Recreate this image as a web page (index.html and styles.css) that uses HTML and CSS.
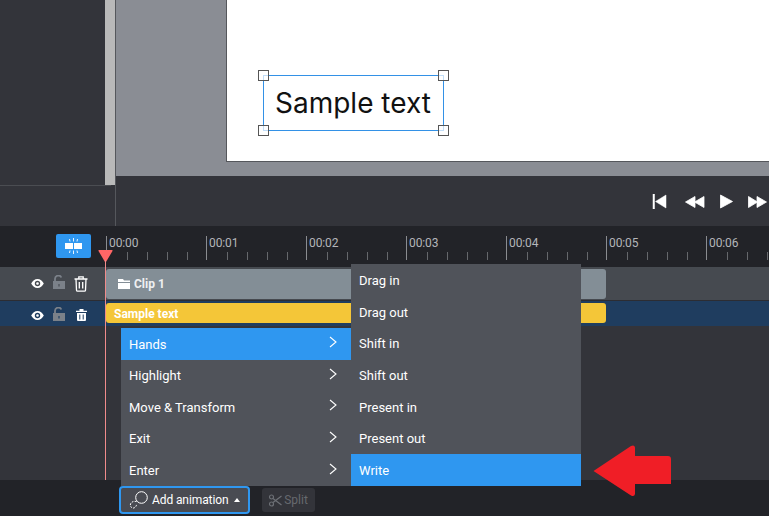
FILE: index.html
```html
<!DOCTYPE html>
<html lang="en">
<head>
<meta charset="utf-8">
<title>Animation editor</title>
<link rel="stylesheet" href="styles.css">
</head>
<body>
<div class="app">
  <section class="top">
    <aside class="side">
      <div class="side-main"><div class="side-fill"></div><div class="scrollbar"></div></div>
      <div class="side-foot"></div>
    </aside>
    <div class="main">
      <div class="stage">
        <div class="canvas">
          <div class="textbox">
            <span class="sample">Sample text</span>
            <i class="handle tl"></i><i class="handle tr"></i><i class="handle bl"></i><i class="handle br"></i>
          </div>
        </div>
      </div>
      <div class="transport">
        <svg class="ticon" width="15" height="15" viewBox="0 0 15 15"><path d="M1 0h1.500v15H1zM14 1v13L3.500 7.500z" fill="#fff" stroke="#fff" stroke-width=".5" stroke-linejoin="round"/></svg>
        <svg class="ticon t-rew" width="21" height="14" viewBox="0 0 21 14"><path d="M11 1.500v11L1.500 7zM20 1.500v11L10.500 7z" fill="#fff" stroke="#fff" stroke-width=".8" stroke-linejoin="round"/></svg>
        <svg class="ticon t-play" width="14" height="15" viewBox="0 0 14 15"><path d="M1.500 1l12 6.500-12 6.500z" fill="#fff" stroke="#fff" stroke-width=".8" stroke-linejoin="round"/></svg>
        <svg class="ticon t-ff" width="20" height="14" viewBox="0 0 20 14"><path d="M.5 1.500v11L9.500 7zM9 1.500v11L18.500 7z" fill="#fff" stroke="#fff" stroke-width=".8" stroke-linejoin="round"/></svg>
      </div>
    </div>
  </section>

  <section class="ruler">
    <div class="ruler-left">
      <button class="snap" aria-label="Snap">
        <svg width="18" height="16" viewBox="0 0 18 16"><path d="M0 5h8v6H0zM9 5h8v6H9z" fill="#fff"/><path d="M8.500 0v3.500M8.500 12.500V16M4.500 1l.5 2.500M12.500 1L12 3.500M4.500 15l.5-2.500M12.500 15l-.5-2.500" stroke="#fff" stroke-width=".9"/></svg>
      </button>
    </div>
    <div class="scale">
      <div class="sec">00:00</div><div class="sec">00:01</div><div class="sec">00:02</div><div class="sec">00:03</div><div class="sec">00:04</div><div class="sec">00:05</div><div class="sec">00:06</div>
    </div>
  </section>

  <section class="tracks">
    <div class="track track-clip">
      <div class="controls">
        <svg width="13" height="9" viewBox="0 0 14 10"><path d="M7 0C4 0 1.500 2 0 5c1.500 3 4 5 7 5s5.500-2 7-5c-1.500-3-4-5-7-5zm0 8a3 3 0 110-6 3 3 0 010 6zm0-1.500a1.500 1.500 0 100-3 1.500 1.500 0 000 3z" fill="#fff"/></svg>
        <svg class="lock" width="12" height="14" viewBox="0 0 12 14"><path d="M2 6.500V3.800a3.300 3.300 0 016.300-1.300" fill="none" stroke="#7b8189" stroke-width="1.800"/><path d="M0 6h12v8H0z" fill="#7b8189"/><path d="M5.300 9h1.400v2.500H5.300z" fill="#50555c"/></svg>
        <svg width="14" height="16" viewBox="0 0 14 16"><path d="M.5 3h13M4.800 3V.8h4.400V3M2 3l.5 11.200q.1 1 1 1h7q.9 0 1-1L12 3M5.300 6v6.500M8.700 6v6.500" fill="none" stroke="#fff" stroke-width="1.300"/></svg>
      </div>
      <div class="lane"><div class="clip"><svg width="12" height="10" viewBox="0 0 12 10"><path d="M0 0h5l1 1.500h6V3H0zM0 4h12v6H0z" fill="#fff"/></svg><span>Clip 1</span></div></div>
    </div>
    <div class="track track-text">
      <div class="controls">
        <svg width="13" height="9" viewBox="0 0 14 10"><path d="M7 0C4 0 1.500 2 0 5c1.500 3 4 5 7 5s5.500-2 7-5c-1.500-3-4-5-7-5zm0 8a3 3 0 110-6 3 3 0 010 6zm0-1.500a1.500 1.500 0 100-3 1.500 1.500 0 000 3z" fill="#fff"/></svg>
        <svg class="lock" width="12" height="14" viewBox="0 0 12 14"><path d="M2 6.500V3.800a3.300 3.300 0 016.300-1.300" fill="none" stroke="#7b8189" stroke-width="1.800"/><path d="M0 6h12v8H0z" fill="#7b8189"/><path d="M5.300 9h1.400v2.500H5.300z" fill="#2d4a69"/></svg>
        <svg width="11" height="12" viewBox="0 0 11 12"><path d="M0 1.800h11v1.300H0zM3.500 0h4v1.800h-4zM1 4h9v7q0 1-1 1H2q-1 0-1-1z" fill="#fff"/><path d="M3.800 5.500v5M7.200 5.500v5" stroke="#1f3d5f" stroke-width="1"/></svg>
      </div>
      <div class="lane"><div class="bar"><span>Sample text</span></div></div>
    </div>
    <div class="empty"></div>
  </section>

  <section class="actions">
    <button class="add">
      <svg width="20" height="18" viewBox="0 0 20 18"><circle cx="12.500" cy="6.500" r="5.800" fill="none" stroke="#fff" stroke-width="1"/><path d="M7.500 10.500C5 10 2.500 10.500 1.500 13c-.5 2 .5 3.500 2 4 2 .5 4-1.500 4-3.500" fill="none" stroke="#fff" stroke-width="1" stroke-dasharray="1.800 1.300"/></svg>
      <span>Add animation</span><i class="caret"></i>
    </button>
    <button class="split">
      <svg width="13" height="13" viewBox="0 0 13 13"><circle cx="2.500" cy="3" r="2" fill="none" stroke="#6d7076" stroke-width="1.200"/><circle cx="2.500" cy="10" r="2" fill="none" stroke="#6d7076" stroke-width="1.200"/><path d="M4 4.500L12.500 11M4 8.500L12.500 2" stroke="#6d7076" stroke-width="1.200"/></svg>
      <span>Split</span>
    </button>
  </section>

  <div class="playhead"><svg width="15" height="13" viewBox="0 0 15 13"><path d="M1 0h13q1 0 .5 1L8 12q-.500 1-1 0L.5 1Q0 0 1 0z" fill="#ff6666"/></svg></div>

  <nav class="menu menu-main">
    <div class="item on">Hands<svg class="chev" width="8" height="12" viewBox="0 0 8 12"><path d="M1 1l6 5-6 5" fill="none" stroke="#fff" stroke-width="1.100"/></svg></div>
    <div class="item">Highlight<svg class="chev" width="8" height="12" viewBox="0 0 8 12"><path d="M1 1l6 5-6 5" fill="none" stroke="#fff" stroke-width="1.100"/></svg></div>
    <div class="item">Move &amp; Transform<svg class="chev" width="8" height="12" viewBox="0 0 8 12"><path d="M1 1l6 5-6 5" fill="none" stroke="#fff" stroke-width="1.100"/></svg></div>
    <div class="item">Exit<svg class="chev" width="8" height="12" viewBox="0 0 8 12"><path d="M1 1l6 5-6 5" fill="none" stroke="#fff" stroke-width="1.100"/></svg></div>
    <div class="item">Enter<svg class="chev" width="8" height="12" viewBox="0 0 8 12"><path d="M1 1l6 5-6 5" fill="none" stroke="#fff" stroke-width="1.100"/></svg></div>
  </nav>
  <nav class="menu menu-sub">
    <div class="item">Drag in</div>
    <div class="item">Drag out</div>
    <div class="item">Shift in</div>
    <div class="item">Shift out</div>
    <div class="item">Present in</div>
    <div class="item">Present out</div>
    <div class="item on">Write</div>
  </nav>

  <svg class="arrow" width="78" height="52" viewBox="0 0 78 52"><path d="M.5 26L38 1q3.500-1.500 4 1.500V11h33q3 0 3 3v25H42v10q-.5 3-4 1.500z" fill="#f01e26"/></svg>
</div>
</body>
</html>
```
FILE: styles.css
```css
* { box-sizing: border-box; }
html, body { margin: 0; height: 100%; }
body { background: #33343a; font-family: Roboto, "Liberation Sans", sans-serif; color: #fff; overflow: hidden; }
button { font: inherit; color: inherit; border: 0; padding: 0; }

.app { position: relative; width: 769px; height: 516px; display: flex; flex-direction: column; overflow: hidden; }

.top { height: 226px; display: flex; flex: none; }
.side { width: 116px; flex: none; display: flex; flex-direction: column; border-right: 1px solid #55575c; background: #33343a; }
.side-main { height: 185px; display: flex; flex: none; }
.side-fill { width: 105px; }
.scrollbar { width: 10px; background: #b9b9b9; }
.side-foot { flex: 1; border-top: 1px solid #4b4d52; margin-right: 4px; }

.main { flex: 1; display: flex; flex-direction: column; }
.stage { height: 176px; flex: none; background: #8a8d94; padding-left: 110px; }
.canvas { height: 162px; background: #fff; border-left: 1px solid #55575c; border-bottom: 1px solid #55575c; padding: 75px 0 0 36px; }
.textbox { position: relative; width: 181px; height: 56px; border: 1px solid #3391e6; display: flex; align-items: center; padding-left: 11px; }
.sample { font-family: Inter, "Noto Sans", sans-serif; font-size: 28px; color: #111; white-space: nowrap; }
.handle { position: absolute; width: 11px; height: 11px; background: rgba(255, 255, 255, .7); border: 1px solid #555; }
.tl { left: -6px; top: -6px; }
.tr { right: -6px; top: -6px; }
.bl { left: -6px; bottom: -6px; }
.br { right: -6px; bottom: -6px; }

.transport { flex: 1; display: flex; align-items: center; padding: 0 0 0 536px; margin-top: 1px; }
.ticon { flex: none; display: block; }
.t-rew { margin-left: 17px; }
.t-play { margin-left: 14px; }
.t-ff { margin-left: 15px; }

.ruler { height: 41px; flex: none; display: flex; background: #222328; }
.ruler-left { width: 106px; flex: none; padding: 8px 0 0 56px; }
.snap { width: 35px; height: 24px; background: #2f97f0; border-radius: 2px; display: flex; align-items: center; justify-content: center; }
.scale { flex: 1; display: flex; padding-top: 10px; }
.sec {
  width: 100px; flex: none; height: 24px; padding-left: 2px;
  border-left: 1px solid #8a8c90;
  font-size: 12px; line-height: 15px; letter-spacing: -.1px; color: #b4b6ba;
  background: repeating-linear-gradient(90deg, transparent 0 19px, #66686c 19px 20px) 1px 16px / 100% 8px no-repeat;
}

.tracks { flex: 1; display: flex; flex-direction: column; }
.track { display: flex; flex: none; }
.track-clip { height: 34px; background: #464a50; border-bottom: 1px solid #2c2d33; }
.track-text { height: 25px; background: #1f3d5f; }
.controls { width: 106px; flex: none; display: grid; grid-template-columns: 13px 12px 14px; column-gap: 9px; align-items: center; justify-items: center; padding-left: 31px; }
.track-text .controls { padding-top: 3px; }
.lock { margin-top: -3px; }
.lane { flex: 1; display: flex; }
.clip { width: 500px; height: 30px; margin-top: 2px; background: #838e96; border-radius: 3px; display: flex; align-items: center; gap: 4px; padding-left: 12px; font-size: 12px; font-weight: 700; color: #eef0f1; }
.bar { width: 500px; height: 20px; margin-top: 2px; background: #f4c638; border-radius: 3px; display: flex; align-items: center; padding: 1px 0 0 8px; font-size: 12px; font-weight: 700; color: #fff; }
.empty { flex: 1; }

.actions { height: 36px; flex: none; background: #222328; display: flex; align-items: flex-start; padding: 6px 0 0 119px; gap: 12px; }
.add { height: 28px; width: 131px; background: #494b52; border: 2px solid #2f97f0; border-radius: 4px; display: flex; align-items: center; padding-left: 8px; font-size: 12px; letter-spacing: -.1px; gap: 3px; color: #fff; }
.caret { width: 0; height: 0; margin-left: 3px; border-left: 3px solid transparent; border-right: 3px solid transparent; border-bottom: 4px solid #fff; }
.split { height: 24px; width: 53px; margin-top: 2px; background: #33343a; border-radius: 3px; display: flex; align-items: center; justify-content: center; gap: 2px; font-size: 12px; color: #66696e; }

.playhead { position: absolute; left: 98px; top: 250px; height: 230px; width: 15px; }
.playhead svg { display: block; }
.playhead::after { content: ""; position: absolute; left: 7px; top: 10px; bottom: 0; width: 1px; background: #f08b8b; }

.menu { position: absolute; background: #50535a; font-size: 13px; color: #fff; }
.menu-main { left: 121px; top: 328px; width: 230px; }
.menu-sub { left: 351px; top: 264px; width: 230px; }
.item { height: 31.700px; display: flex; align-items: center; justify-content: space-between; padding: 1px 14px 0 8px; }
.menu-main .item { height: 31.600px; padding-top: .8px; }
.chev { margin-bottom: 4px; }
.item.on { background: #2f97f0; }

.arrow { position: absolute; left: 593px; top: 445px; }
```
